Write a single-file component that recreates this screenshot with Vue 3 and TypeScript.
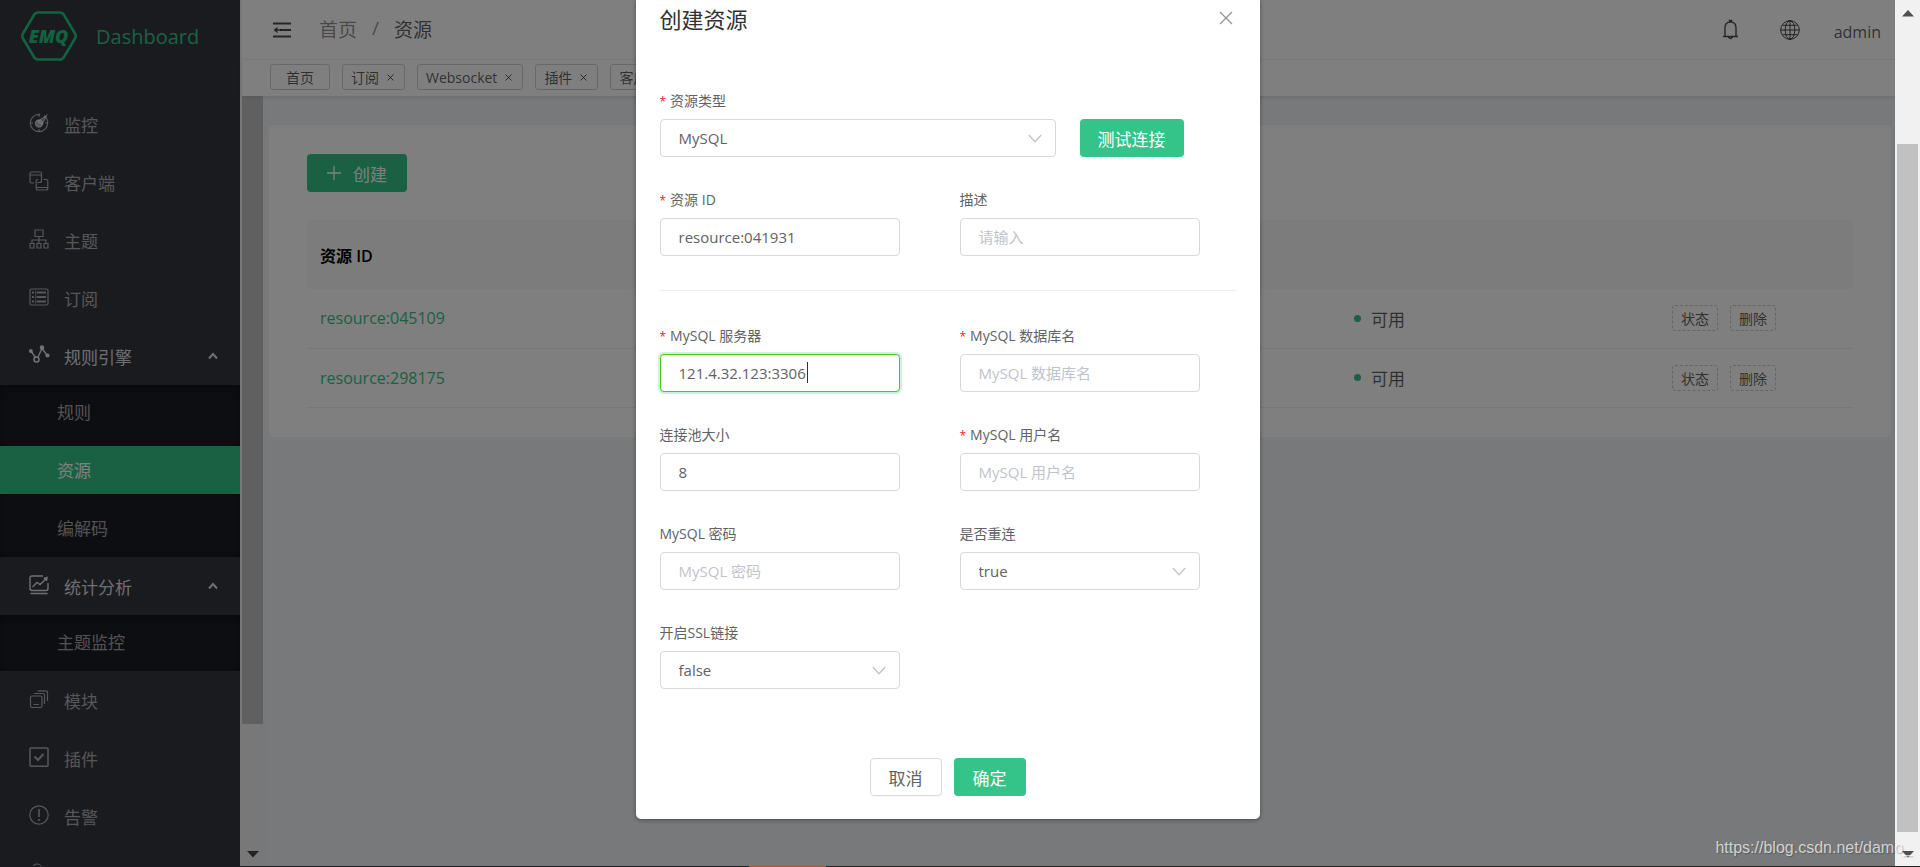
<script setup lang="ts">
import { ref } from 'vue'

interface MenuItem {
  label: string
  icon: string
  children?: string[]
}

interface Field {
  id: string
  label: string
  required?: boolean
  value?: string
  placeholder?: string
  options?: string[]
  focused?: boolean
}

const menu: MenuItem[] = [
  { label: '监控', icon: 'monitor' },
  { label: '客户端', icon: 'client' },
  { label: '主题', icon: 'topic' },
  { label: '订阅', icon: 'subscribe' },
  { label: '规则引擎', icon: 'rule', children: ['规则', '资源', '编解码'] },
  { label: '统计分析', icon: 'chart', children: ['主题监控'] },
  { label: '模块', icon: 'module' },
  { label: '插件', icon: 'plugin' },
  { label: '告警', icon: 'alarm' },
  { label: '', icon: 'user' },
]
const activeItem = '资源'

const tabs = ['首页', '订阅', 'Websocket', '插件', '客户端']
const rows = ref(['resource:045109', 'resource:298175'])

const basicFields = ref<Field[]>([
  { id: 'rid', label: '资源 ID', required: true, value: 'resource:041931' },
  { id: 'desc', label: '描述', placeholder: '请输入' },
])

const configFields = ref<Field[]>([
  { id: 'server', label: 'MySQL 服务器', required: true, value: '121.4.32.123:3306', focused: true },
  { id: 'db', label: 'MySQL 数据库名', required: true, placeholder: 'MySQL 数据库名' },
  { id: 'pool', label: '连接池大小', value: '8' },
  { id: 'user', label: 'MySQL 用户名', required: true, placeholder: 'MySQL 用户名' },
  { id: 'pwd', label: 'MySQL 密码', placeholder: 'MySQL 密码' },
  { id: 'reconnect', label: '是否重连', value: 'true', options: ['true', 'false'] },
  { id: 'ssl', label: '开启SSL链接', value: 'false', options: ['true', 'false'] },
])
</script>

<template>
  <div class="app">
    <aside class="sidebar">
      <div class="brand">
        <svg class="logo" width="58" height="52" viewBox="0 0 58 52" role="img" aria-label="EMQ">
          <path d="M18 2.500H40Q42.500 2.500 44 5L55 23.500Q56.500 26 55 28.500L44 47Q42.500 49.500 40 49.500H18Q15.500 49.500 14 47L3 28.500Q1.500 26 3 23.500L14 5Q15.500 2.500 18 2.500Z" fill="none" stroke="currentColor" stroke-width="2.600" />
          <text x="28.500" y="32.500" text-anchor="middle" class="logo-text">EMQ</text>
        </svg>
        <span class="brand-name">Dashboard</span>
      </div>
      <nav>
        <template v-for="item in menu" :key="item.icon">
          <a href="#" class="menu-item" :class="{ open: item.children }">
            <svg class="menu-icon" width="20" height="20" viewBox="0 0 20 20" fill="none" stroke="currentColor" stroke-width="1.2">
              <template v-if="item.icon === 'monitor'">
                <circle cx="10" cy="10" r="8.700" stroke-dasharray="42 4 9" />
                <path d="M10 1.500V4M10 16V18.500M1.500 10H4M16 10H18.500" />
                <circle cx="10" cy="10.500" r="3.600" fill="currentColor" />
                <path d="M8.500 8.500L17.500 2.500L13 11.500Z" fill="currentColor" fill-opacity=".6" />
              </template>
              <template v-else-if="item.icon === 'client'">
                <path d="M5 12H2.500Q1 12 1 10.500V2.500Q1 1 2.500 1H11Q12.500 1 12.500 2.500V9.500Q12.500 11.500 10.500 11.500H8.500M1 4H12.500" />
                <path d="M14.500 8.500H17Q18.800 8.500 18.800 10V17Q18.800 19 17 19H9Q7.200 19 7.200 17V10.500Q7.200 8.500 9 8.500M7.200 16.500H18.800" />
              </template>
              <template v-else-if="item.icon === 'topic'">
                <path d="M6 1H14V7.500H6ZM10 7.500V14.500M3 14.500V11H17V14.500M1 14.500H5V19H1ZM8 14.500H12V19H8ZM15 14.500H19V19H15Z" />
              </template>
              <template v-else-if="item.icon === 'subscribe'">
                <rect x="1" y="2" width="18" height="16" rx="1.500" />
                <path d="M3 5.500H5M3 10H5M3 14.500H5M7.500 5.500H17M7.500 10H17M7.500 14.500H17" stroke-width="2" />
                <path d="M6.500 3V17" stroke-width=".6" />
              </template>
              <template v-else-if="item.icon === 'rule'">
                <path d="M2 6L6.500 12.500M9 12L13 3.500M13 3.500L18 10" stroke-width="1.400" />
                <circle cx="7.500" cy="14.500" r="2.500" stroke-width="1.500" />
                <g fill="currentColor" stroke="none"><circle cx="1.800" cy="6" r="2" /><circle cx="13" cy="2.500" r="2.300" /><circle cx="18.500" cy="10.500" r="2.100" /></g>
              </template>
              <template v-else-if="item.icon === 'chart'">
                <path d="M14 1H3Q1 1 1 3V13.500Q1 15.500 3 15.500H17Q19 15.500 19 13.500V8M1.500 18.500H18.500M3.500 12L8 7.500L11 9.500L17 4" stroke-width="1.400" />
                <path d="M14 3L19 1.500L18 6.500Z" fill="currentColor" stroke="none" />
              </template>
              <template v-else-if="item.icon === 'module'">
                <rect x="1.500" y="7" width="11.500" height="11.500" rx="1.500" />
                <path d="M4.500 15.500H10M5 4.500H14Q15.500 4.500 15.500 6V15M8.500 1.800H16.500Q18.500 1.800 18.500 3.500V12" />
              </template>
              <template v-else-if="item.icon === 'plugin'">
                <rect x="1" y="1" width="18" height="18.300" rx="1" stroke-width="1.500" />
                <path d="M5.500 9.500L9 13L14.500 7" stroke-width="2" />
              </template>
              <template v-else-if="item.icon === 'alarm'">
                <circle cx="10" cy="10" r="9.200" />
                <path d="M10 4V12M10 14V16" stroke-width="1.600" />
              </template>
              <template v-else>
                <circle cx="8" cy="5.500" r="4.500" />
                <path d="M1 19Q1 11 8 11Q15 11 15 19" />
              </template>
            </svg>
            <span>{{ item.label }}</span>
            <svg v-if="item.children" class="arrow" width="10" height="8" viewBox="0 0 10 8" fill="none" stroke="currentColor" stroke-width="2">
              <path d="M1 6.500L5 2L9 6.500" />
            </svg>
          </a>
          <div v-if="item.children" class="submenu">
            <a v-for="child in item.children" :key="child" href="#" class="sub-item" :class="{ active: child === activeItem }">{{ child }}</a>
          </div>
        </template>
      </nav>
    </aside>

    <div class="main">
      <header class="topbar">
        <button class="icon-btn" aria-label="收起菜单">
          <svg width="18" height="16" viewBox="0 0 18 16" fill="none" stroke="currentColor" stroke-width="2">
            <path d="M0 1.500H18M7 8H18M0 14.500H18" />
            <path d="M0.500 8L4.500 4.800V11.200ZM4 7.200H8V8.800H4Z" fill="currentColor" stroke="none" />
          </svg>
        </button>
        <div class="crumbs">
          <a href="#">首页</a><span class="slash">/</span><span class="current">资源</span>
        </div>
        <button class="icon-btn bell" aria-label="通知">
          <svg width="17" height="21" viewBox="0 0 17 21" fill="none" stroke="currentColor" stroke-width="1.400">
            <path d="M1 17.500H16M3 17.500V9Q3 3 8.500 3Q14 3 14 9V17.500M6.500 18Q8.500 21 10.500 18M7.500 3V1.500H9.500V3" />
          </svg>
        </button>
        <button class="icon-btn globe" aria-label="语言">
          <svg width="20" height="20" viewBox="0 0 20 20" fill="none" stroke="currentColor" stroke-width="1">
            <circle cx="10" cy="10" r="9.300" />
            <ellipse cx="10" cy="10" rx="4.800" ry="9.300" />
            <path d="M10 .7V19.300M.7 10H19.300M2.500 5.300H17.500M2.500 14.700H17.500" />
          </svg>
        </button>
        <span class="account">admin</span>
      </header>
      <div class="tabs">
        <div v-for="(tab, i) in tabs" :key="tab" class="tab" :class="{ home: i === 0 }">
          <a href="#">{{ tab }}</a>
          <button v-if="i > 0" class="tab-close" aria-label="关闭标签">
            <svg width="7" height="7" viewBox="0 0 7 7" stroke="currentColor"><path d="M.5 .5L6.500 6.500M6.500 .5L.5 6.500" /></svg>
          </button>
        </div>
      </div>
      <div class="body">
        <div class="side-scroll">
          <div class="side-thumb"></div>
          <svg width="12" height="7" viewBox="0 0 12 7"><path d="M0 0H12L6 6.500Z" fill="#444" /></svg>
        </div>
        <main class="content">
          <section class="card">
            <button class="btn primary create">
              <svg width="14" height="14" viewBox="0 0 14 14" stroke="currentColor" stroke-width="1.300"><path d="M7 0V14M0 7H14" /></svg>
              创建
            </button>
            <table class="table">
              <thead>
                <tr><th class="col-id">资源 ID</th><th class="col-status"></th><th></th></tr>
              </thead>
              <tbody>
                <tr v-for="row in rows" :key="row">
                  <td><a href="#" class="link">{{ row }}</a></td>
                  <td><span class="status"><i class="dot"></i>可用</span></td>
                  <td><div class="ops"><button class="dashed">状态</button><button class="dashed">删除</button></div></td>
                </tr>
              </tbody>
            </table>
          </section>
        </main>
      </div>
    </div>

    <div class="mask">
      <div class="dialog" role="dialog" aria-modal="true" aria-labelledby="dialog-title">
        <div class="dialog-head">
          <h2 id="dialog-title">创建资源</h2>
          <button class="close" aria-label="关闭">
            <svg width="14" height="14" viewBox="0 0 14 14" stroke="currentColor" stroke-width="1.200"><path d="M1 1L13 13M13 1L1 13" /></svg>
          </button>
        </div>
        <form class="form" @submit.prevent>
          <div class="type-row">
            <div class="field type-field">
              <label for="type" class="required">资源类型</label>
              <div class="control">
                <select id="type"><option>MySQL</option></select>
                <svg class="chevron" width="14" height="9" viewBox="0 0 14 9" fill="none" stroke="currentColor" stroke-width="1.300"><path d="M.8 1L7 7.800L13.200 1" /></svg>
              </div>
            </div>
            <button type="button" class="btn primary test">测试连接</button>
          </div>
          <div class="grid">
            <div v-for="f in basicFields" :key="f.id" class="field">
              <label :for="f.id" :class="{ required: f.required }">{{ f.label }}</label>
              <div class="control"><input :id="f.id" v-model="f.value" type="text" :placeholder="f.placeholder" /></div>
            </div>
          </div>
          <hr />
          <div class="grid">
            <div v-for="f in configFields" :key="f.id" class="field">
              <label :for="f.id" :class="{ required: f.required }">{{ f.label }}</label>
              <div class="control">
                <template v-if="f.options">
                  <select :id="f.id" v-model="f.value"><option v-for="o in f.options" :key="o">{{ o }}</option></select>
                  <svg class="chevron" width="14" height="9" viewBox="0 0 14 9" fill="none" stroke="currentColor" stroke-width="1.300"><path d="M.8 1L7 7.800L13.200 1" /></svg>
                </template>
                <template v-else>
                  <input :id="f.id" v-model="f.value" type="text" :placeholder="f.placeholder" :class="{ focused: f.focused }" />
                  <span v-if="f.focused" class="caret"></span>
                </template>
              </div>
            </div>
          </div>
          <div class="dialog-foot">
            <button type="button" class="btn plain">取消</button>
            <button type="submit" class="btn primary">确定</button>
          </div>
        </form>
      </div>
    </div>

    <div class="page-scroll">
      <svg width="12" height="7" viewBox="0 0 12 7"><path d="M0 6.500H12L6 0Z" fill="#505050" /></svg>
      <div class="page-thumb"></div>
      <svg width="12" height="7" viewBox="0 0 12 7"><path d="M0 0H12L6 6.500Z" fill="#505050" /></svg>
    </div>
    <div class="watermark">https://blog.csdn.net/damo_</div>
    <div class="edge"></div>
  </div>
</template>

<style>
body {
  margin: 0;
  overflow: hidden;
}
</style>

<style scoped>
* {
  box-sizing: border-box;
}
.app {
  position: relative;
  display: flex;
  height: 100vh;
  padding-right: 25px;
  overflow: hidden;
  font-family: 'Open Sans', 'Noto Sans CJK SC', sans-serif;
  font-size: 16px;
  color: rgba(0, 0, 0, 0.65);
  background: #f0f2f5;
}
a {
  color: inherit;
  text-decoration: none;
}
button,
input,
select {
  font: inherit;
  color: inherit;
}
button {
  padding: 0;
  border: 0;
  background: none;
  cursor: pointer;
}
svg {
  display: block;
}

/* Sidebar */
.sidebar {
  flex: 0 0 240px;
  overflow: hidden;
  background: #34363f;
}
.brand {
  display: flex;
  align-items: center;
  gap: 18px;
  height: 95px;
  padding: 0 0 23px 20px;
  color: #34c388;
}
.logo {
  color: #24c380;
}
.logo-text {
  font: italic 800 18px 'Open Sans', sans-serif;
  fill: currentColor;
}
.brand-name {
  font-size: 20px;
}
.menu-item {
  display: flex;
  align-items: center;
  height: 58px;
  padding: 0 22px 0 29px;
  font-size: 17px;
  color: rgba(255, 255, 255, 0.6);
}
.menu-item.open {
  color: rgba(255, 255, 255, 0.85);
}
.menu-icon {
  margin: 0 15px 2px 0;
  overflow: visible;
}
.arrow {
  margin-left: auto;
}
.submenu {
  display: flex;
  flex-direction: column;
  gap: 10px;
  padding: 3px 0 5px;
  background: #1b1d23;
  box-shadow: inset 0 2px 10px rgba(0, 0, 0, 0.45);
}
.sub-item {
  height: 48px;
  padding-left: 57px;
  font-size: 17px;
  line-height: 50px;
  color: rgba(255, 255, 255, 0.6);
}
.sub-item.active {
  background: #34c388;
  color: #fff;
}

/* Main column */
.main {
  display: flex;
  flex: 1;
  flex-direction: column;
  min-width: 0;
  border-left: 2px solid #f1f1f1;
}
.topbar {
  display: flex;
  align-items: center;
  height: 60px;
  padding: 0 14px 0 31px;
  background: #fff;
  border-bottom: 1px solid #f8f8f8;
}
.icon-btn {
  color: rgba(0, 0, 0, 0.7);
}
.crumbs {
  display: flex;
  gap: 15px;
  margin-left: 28px;
  padding-bottom: 2px;
  font-size: 19px;
  color: rgba(0, 0, 0, 0.45);
}
.current {
  color: rgba(0, 0, 0, 0.65);
}
.bell {
  margin-left: auto;
}
.globe {
  margin: 0 34px 0 41px;
}
.account {
  padding-top: 5px;
}
.tabs {
  position: relative;
  z-index: 1;
  display: flex;
  gap: 12px;
  height: 36px;
  padding: 4px 28px 6px;
  background: #fff;
  box-shadow: 0 1px 4px rgba(0, 21, 41, 0.12);
}
.tab {
  display: flex;
  align-items: center;
  gap: 8px;
  height: 26px;
  padding: 0 10px 0 8px;
  border: 1px solid #d0d1d4;
  border-radius: 3px;
  font-size: 14px;
}
.tab.home {
  padding: 0 15px;
}
.body {
  display: flex;
  flex: 1;
  min-height: 0;
}
.side-scroll {
  display: flex;
  flex: 0 0 24px;
  flex-direction: column;
  justify-content: space-between;
  padding: 0 3px 9px 0;
  background: #f1f1f1;
}
.side-scroll svg {
  margin-left: 5px;
}
.side-thumb {
  height: 83%;
  max-height: 628px;
  background: #c1c1c1;
}
.content {
  flex: 1;
  min-width: 0;
  padding: 29px 4px 0 3px;
}
.card {
  padding: 29px 38px;
  border-radius: 5px;
  background: #fff;
}
.btn {
  display: inline-flex;
  align-items: center;
  justify-content: center;
  height: 38px;
  padding: 0 18px;
  border-radius: 4px;
  font-size: 17px;
}
.primary {
  background: #34c388;
  color: #fff;
}
.create {
  display: flex;
  gap: 12px;
  width: 100px;
}
.table {
  width: 100%;
  margin-top: 28px;
  border-collapse: collapse;
  table-layout: fixed;
}
.table th {
  height: 69px;
  padding: 0 13px;
  background: #f9f9f9;
  text-align: left;
  font-weight: 600;
  color: #000;
}
.table th:first-child {
  border-radius: 6px 0 0 0;
}
.col-id {
  width: 1034px;
}
.col-status {
  width: 318px;
}
.table td {
  height: 59px;
  padding: 0 13px;
  border-bottom: 1px solid #ebeef5;
}
.link {
  color: #34c388;
}
.status {
  display: flex;
  align-items: center;
  gap: 10px;
  font-size: 17px;
}
.dot {
  width: 7px;
  height: 7px;
  border-radius: 50%;
  background: #34c388;
}
.ops {
  display: flex;
  gap: 12px;
}
.dashed {
  height: 26px;
  padding: 0 8px;
  border: 1px dashed #c9cbd0;
  border-radius: 3px;
  font-size: 14px;
}

/* Dialog */
.mask {
  position: absolute;
  inset: 0 25px 0 0;
  z-index: 2;
  background: rgba(0, 0, 0, 0.5);
}
.dialog {
  width: 624px;
  margin: 0 auto;
  padding: 0 24px 23px;
  border-radius: 0 0 5px 5px;
  background: #fff;
  box-shadow: 0 1px 4px rgba(0, 0, 0, 0.4);
  color: #606266;
}
.dialog-head {
  display: flex;
  align-items: center;
  justify-content: space-between;
  height: 36px;
  margin-bottom: 47px;
  padding-right: 3px;
}
.dialog-head h2 {
  margin: 0;
  font-size: 22px;
  font-weight: 400;
  color: #303133;
}
.close {
  color: #909399;
}
.type-row {
  display: flex;
  align-items: flex-start;
  gap: 24px;
}
.type-field {
  width: 396px;
}
.test {
  margin-top: 36px;
}
.grid {
  display: grid;
  grid-template-columns: 240px 240px;
  column-gap: 60px;
}
.field {
  margin-bottom: 25px;
}
.field label {
  display: block;
  height: 36px;
  font-size: 14px;
  line-height: 36px;
}
.required::before {
  content: '*';
  margin-right: 4px;
  font-size: 12px;
  color: #f5222d;
}
.control {
  position: relative;
}
.control input,
.control select {
  display: block;
  width: 100%;
  height: 38px;
  padding: 0 18px;
  border: 1px solid #d9d9d9;
  border-radius: 4px;
  outline: 0;
  appearance: none;
  background: #fff;
  font-size: 15px;
}
.control input::placeholder {
  color: #c0c4cc;
  opacity: 1;
}
.control input.focused {
  border-color: #52c41a;
  box-shadow: 0 0 0 2px rgba(52, 195, 136, 0.25);
}
.caret {
  position: absolute;
  top: 8px;
  left: 147px;
  width: 1px;
  height: 21px;
  background: #303133;
}
.chevron {
  position: absolute;
  top: 15px;
  right: 14px;
  color: #c0c4cc;
  pointer-events: none;
}
hr {
  height: 1px;
  margin: 9px 0 27px;
  border: 0;
  background: #ebeef0;
}
.dialog-foot {
  display: flex;
  justify-content: center;
  gap: 12px;
  padding-top: 44px;
}
.dialog-foot .btn {
  min-width: 72px;
}
.plain {
  border: 1px solid #d9d9d9;
  box-shadow: 0 2px 0 rgba(0, 0, 0, 0.015);
}

/* Page scrollbar, watermark and lower edge */
.page-scroll {
  position: absolute;
  inset: 0 0 0 auto;
  z-index: 2;
  display: flex;
  flex-direction: column;
  align-items: center;
  width: 25px;
  padding: 10px 2px 9px;
  background: #f1f1f1;
}
.page-thumb {
  flex: 1;
  align-self: stretch;
  margin: 127px 0 19px;
  background: #c1c1c1;
}
.watermark {
  position: absolute;
  right: 8px;
  bottom: 10px;
  z-index: 3;
  font: 16px 'Liberation Sans', Arial, sans-serif;
  color: rgba(255, 255, 255, 0.7);
  text-shadow: 1px 1px 1px rgba(0, 0, 0, 0.25);
}
.edge {
  position: absolute;
  inset: auto 0 0;
  z-index: 3;
  height: 1px;
  background: linear-gradient(90deg, #1c1c24 39%, #a85a2a 39%, #a85a2a 43%, #222 43%);
}
</style>
